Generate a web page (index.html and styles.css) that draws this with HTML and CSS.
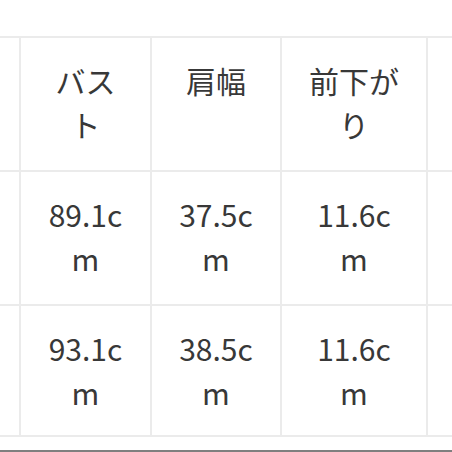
FILE: index.html
```html
<!DOCTYPE html>
<html lang="ja">
<head>
<meta charset="utf-8">
<link rel="stylesheet" href="styles.css">
</head>
<body>
<div class="sheet">
  <div class="size-table">
    <div class="cell edge"></div>
    <div class="cell">バスト</div>
    <div class="cell">肩幅</div>
    <div class="cell">前下がり</div>
    <div class="cell edge"></div>

    <div class="cell edge"></div>
    <div class="cell">89.1cm</div>
    <div class="cell">37.5cm</div>
    <div class="cell">11.6cm</div>
    <div class="cell edge"></div>

    <div class="cell edge"></div>
    <div class="cell">93.1cm</div>
    <div class="cell">38.5cm</div>
    <div class="cell">11.6cm</div>
    <div class="cell edge"></div>
  </div>
  <div class="bottom-rule"></div>
</div>
</body>
</html>
```

FILE: styles.css
```css
html, body {
  margin: 0;
  padding: 0;
  overflow: hidden;
  background: #ffffff;
}

.sheet {
  padding-top: 36px;
}

.size-table {
  display: grid;
  grid-template-columns: 19px 129px 128px 144px minmax(0, 1fr);
  grid-template-rows: 132px 132px 129px;
  gap: 2px;
  background: #ebebeb;
  border-top: 2px solid #ebebeb;
  border-bottom: 2px solid #ebebeb;
}

.cell {
  background: #ffffff;
  padding: 20px 25px 0;
  text-align: center;
  font-family: "Noto Sans CJK JP", "Noto Sans", sans-serif;
  font-size: 30px;
  font-weight: 400;
  line-height: 44px;
  color: #383838;
  word-break: break-all;
  min-width: 0;
}

.cell.edge {
  padding: 0;
}

.bottom-rule {
  margin-top: 13px;
  height: 2px;
  background: #7f7f7f;
}
```
